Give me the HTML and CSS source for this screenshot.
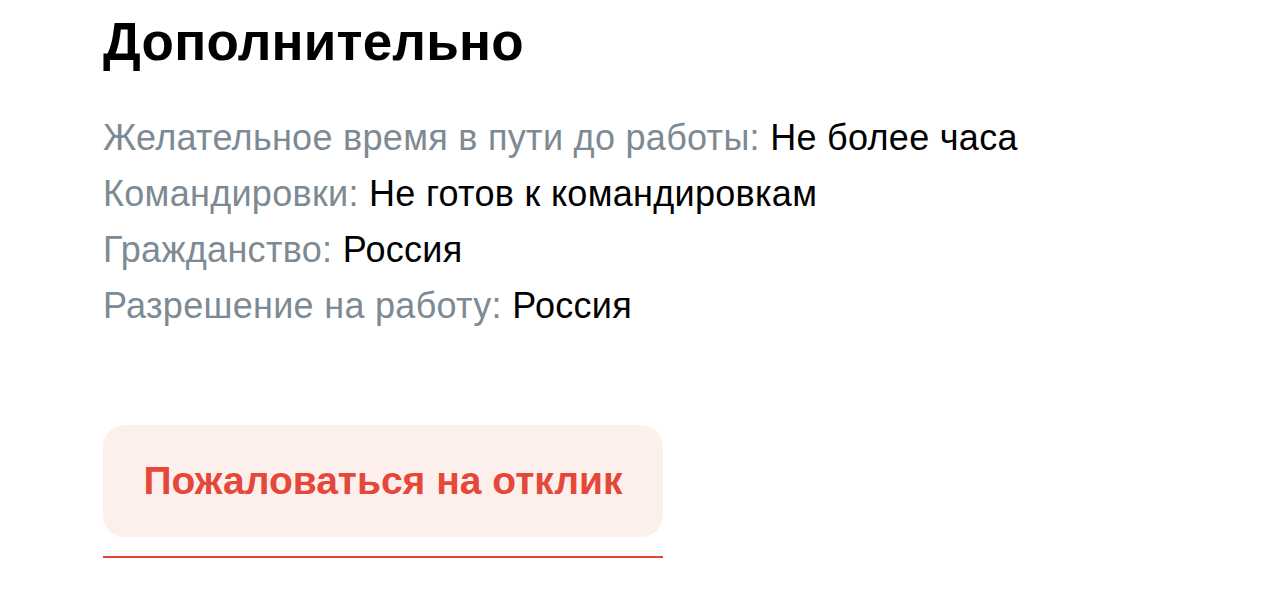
FILE: index.html
```html
<!DOCTYPE html>
<html lang="ru">
<head>
    <meta charset="UTF-8">
    <meta name="viewport" content="width=device-width, initial-scale=1.0">
    <title>Дополнительно</title>
    <link rel="stylesheet" href="styles.css">
</head>
<body>
    <section class="extra">
        <h2 class="extra-title">Дополнительно</h2>
        <ul class="extra-list">
            <li><span class="extra-label">Желательное время в пути до работы:</span> Не более часа</li>
            <li><span class="extra-label">Командировки:</span> Не готов к командировкам</li>
            <li><span class="extra-label">Гражданство:</span> Россия</li>
            <li><span class="extra-label">Разрешение на работу:</span> Россия</li>
        </ul>

        <div class="complain">
            <button class="complain-btn">Пожаловаться на отклик</button>
        </div>
    </section>
</body>
</html>
```

FILE: styles.css
```css
body {
    margin: 0;
    background: #fff;
    font-family: "Liberation Sans", Arial, sans-serif;
    color: #000;
}
.extra {
    padding: 0 0 0 103px;
}
.extra-title {
    margin: 0;
    padding-top: 10px;
    font-size: 53px;
    line-height: 64px;
    font-weight: bold;
    letter-spacing: 0.2px;
}
.extra-list {
    list-style: none;
    margin: 36px 0 0;
    padding: 0;
}
.extra-list li {
    font-size: 36px;
    line-height: 56px;
    letter-spacing: 0.3px;
}
.extra-label {
    color: #7d8a93;
}
.complain {
    display: inline-block;
    margin-top: 91px;
    padding-bottom: 19px;
    border-bottom: 2px solid #e8432e;
}
.complain-btn {
    display: block;
    width: 560px;
    height: 112px;
    border: none;
    border-radius: 22px;
    background: #fdf0ec;
    color: #e5483a;
    font-family: inherit;
    font-size: 39px;
    font-weight: bold;
    cursor: pointer;
}
```
